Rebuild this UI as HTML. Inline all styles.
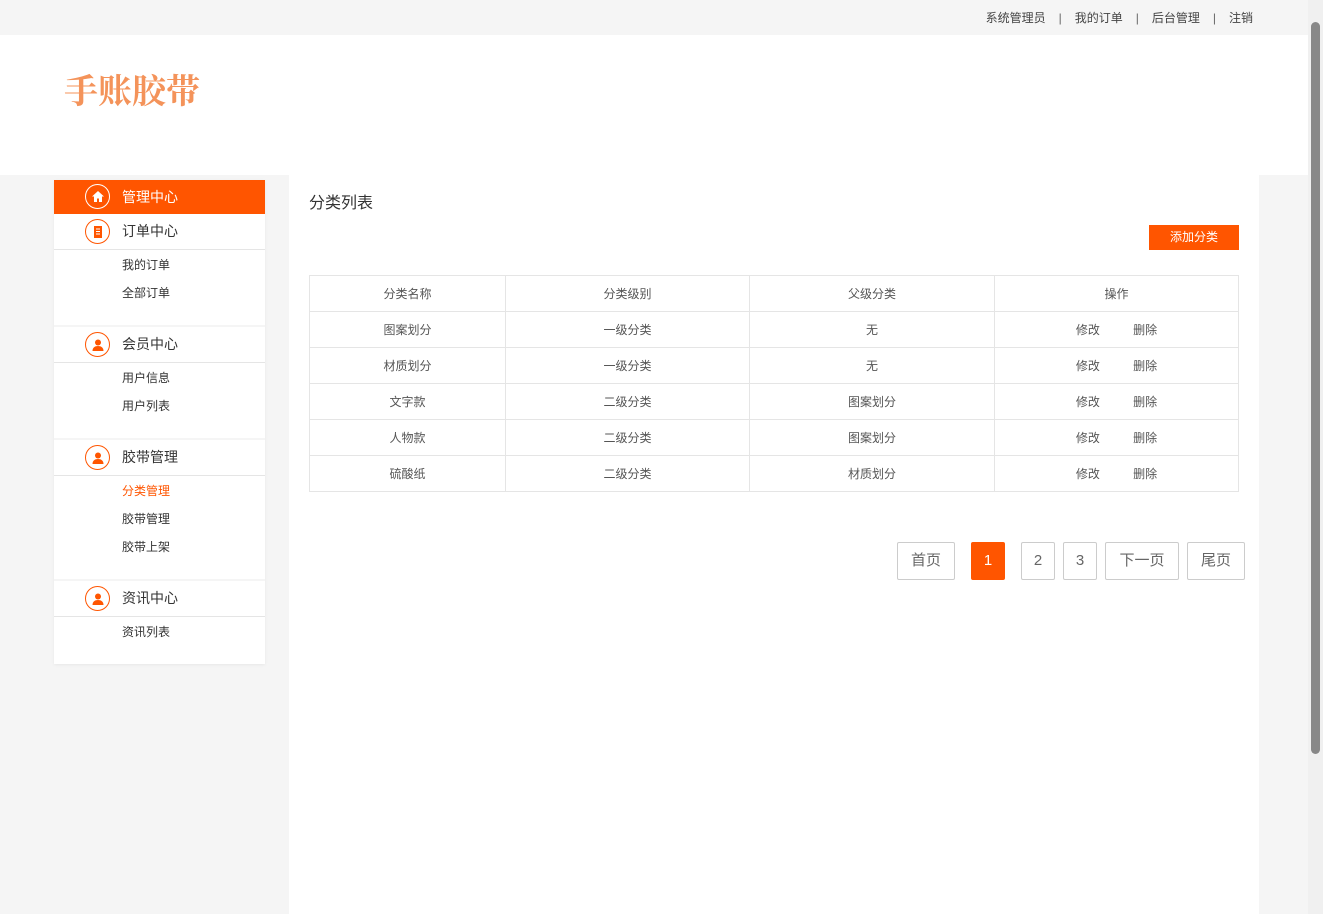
<!DOCTYPE html>
<html><head><meta charset="utf-8"><style>
*{margin:0;padding:0;box-sizing:border-box}
body{width:1323px;height:914px;overflow:hidden;background:#f5f5f5;font-family:"Liberation Sans","Noto Sans CJK SC",sans-serif;color:#333;font-size:12px;position:relative}
.top{position:absolute;left:0;top:0;width:1308px;height:35px;background:#f5f5f5}
.top .links{position:absolute;right:55px;top:9px;font-size:12px;color:#444}
.top .links span.sep{margin:0 13px;color:#666}
.head{position:absolute;left:0;top:35px;width:1308px;height:140px;background:#fff}
.logo{position:absolute;left:64px;top:30px;font-family:"Noto Serif CJK SC",serif;font-size:34px;font-weight:bold;color:#f4935a;line-height:48px}
.side{position:absolute;left:54px;top:180px;width:211px;background:#fff;box-shadow:0 1px 3px rgba(0,0,0,.06)}
.sh{height:36px;position:relative;border-bottom:1px solid #e5e5e5;font-size:14px;color:#333;line-height:35px;padding-left:68px}
.sh.on{background:#ff5500;color:#fff;border-bottom:none;height:34px;line-height:34px}
.ic{position:absolute;left:31px;top:5px;width:25px;height:25px;border-radius:50%;border:1.5px solid #ff5500;display:flex;align-items:center;justify-content:center}
.on .ic{border-color:#fff;top:4px}
.items{padding:1px 0 18px 68px}
.items div{height:28px;line-height:28px;font-size:12px;color:#333}
.items div.cur{color:#ff5500}
.sec{border-top:2px solid #f5f5f5}
.main{position:absolute;left:289px;top:175px;width:970px;height:739px;background:#fff}
.title{position:absolute;left:20px;top:14px;font-size:16px;color:#333}
.btn{position:absolute;left:860px;top:50px;width:90px;height:25px;background:#ff5500;color:#fff;text-align:center;line-height:25px;font-size:12px}
table{position:absolute;left:20px;top:100px;width:930px;border-collapse:collapse}
td{border:1px solid #e5e5e5;height:36px;text-align:center;font-size:12px;color:#555}
.pg{position:absolute;top:367px;height:38px;border:1px solid #ccc;border-radius:2px;text-align:center;line-height:36px;font-size:15px;color:#666}
.pg.on{background:#ff5500;color:#fff;border-color:#ff5500}
.sb{position:absolute;left:1308px;top:0;width:15px;height:914px;background:#f0f0f0}
.sb .th{position:absolute;left:3px;top:22px;width:9px;height:732px;background:#888;border-radius:5px}
</style></head><body>
<div class="top"><div class="links">系统管理员<span class="sep">|</span>我的订单<span class="sep">|</span>后台管理<span class="sep">|</span>注销</div></div>
<div class="head"><div class="logo">手账胶带</div></div>
<div class="side">
<div class="sh on"><span class="ic"><svg width="14" height="13" viewBox="0 0 14 13"><path d="M7 1L1 6.5h2V12h3V8.5h2V12h3V6.5h2z" fill="#fff"/></svg></span>管理中心</div>
<div class="sh"><span class="ic"><svg width="12" height="14" viewBox="0 0 12 14"><rect x="2" y="1" width="8" height="12" fill="#ff5500"/><path d="M4 4h4M4 6.5h4M4 9h4" stroke="#fff" stroke-width="1"/></svg></span>订单中心</div>
<div class="items"><div>我的订单</div><div>全部订单</div></div>
<div class="sec"><div class="sh"><span class="ic"><svg width="14" height="14" viewBox="0 0 14 14"><circle cx="7" cy="4.5" r="3" fill="#ff5500"/><path d="M1.5 13c0-3.5 2.5-5 5.5-5s5.5 1.5 5.5 5z" fill="#ff5500"/></svg></span>会员中心</div>
<div class="items"><div>用户信息</div><div>用户列表</div></div></div>
<div class="sec"><div class="sh"><span class="ic"><svg width="14" height="14" viewBox="0 0 14 14"><circle cx="7" cy="4.5" r="3" fill="#ff5500"/><path d="M1.5 13c0-3.5 2.5-5 5.5-5s5.5 1.5 5.5 5z" fill="#ff5500"/></svg></span>胶带管理</div>
<div class="items"><div class="cur">分类管理</div><div>胶带管理</div><div>胶带上架</div></div></div>
<div class="sec"><div class="sh"><span class="ic"><svg width="14" height="14" viewBox="0 0 14 14"><circle cx="7" cy="4.5" r="3" fill="#ff5500"/><path d="M1.5 13c0-3.5 2.5-5 5.5-5s5.5 1.5 5.5 5z" fill="#ff5500"/></svg></span>资讯中心</div>
<div class="items"><div>资讯列表</div></div></div>
</div>
<div class="main">
<div class="title">分类列表</div>
<div class="btn">添加分类</div>
<table>
<tr><td style="width:196px">分类名称</td><td style="width:244px">分类级别</td><td style="width:245px">父级分类</td><td>操作</td></tr>
<tr><td>图案划分</td><td>一级分类</td><td>无</td><td>修改&nbsp;&nbsp;&nbsp;&nbsp;&nbsp;&nbsp;&nbsp;&nbsp;&nbsp;&nbsp;删除</td></tr>
<tr><td>材质划分</td><td>一级分类</td><td>无</td><td>修改&nbsp;&nbsp;&nbsp;&nbsp;&nbsp;&nbsp;&nbsp;&nbsp;&nbsp;&nbsp;删除</td></tr>
<tr><td>文字款</td><td>二级分类</td><td>图案划分</td><td>修改&nbsp;&nbsp;&nbsp;&nbsp;&nbsp;&nbsp;&nbsp;&nbsp;&nbsp;&nbsp;删除</td></tr>
<tr><td>人物款</td><td>二级分类</td><td>图案划分</td><td>修改&nbsp;&nbsp;&nbsp;&nbsp;&nbsp;&nbsp;&nbsp;&nbsp;&nbsp;&nbsp;删除</td></tr>
<tr><td>硫酸纸</td><td>二级分类</td><td>材质划分</td><td>修改&nbsp;&nbsp;&nbsp;&nbsp;&nbsp;&nbsp;&nbsp;&nbsp;&nbsp;&nbsp;删除</td></tr>
</table>
<div class="pg" style="left:608px;width:58px">首页</div>
<div class="pg on" style="left:682px;width:34px">1</div>
<div class="pg" style="left:732px;width:34px">2</div>
<div class="pg" style="left:774px;width:34px">3</div>
<div class="pg" style="left:816px;width:74px">下一页</div>
<div class="pg" style="left:898px;width:58px">尾页</div>
</div>
<div class="sb"><div class="th"></div></div>
</body></html>
